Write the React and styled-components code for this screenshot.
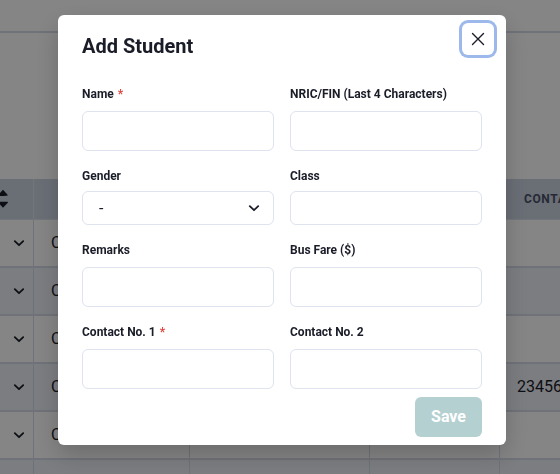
import React from "react";
import styled, { createGlobalStyle } from "styled-components";

const GlobalStyle = createGlobalStyle`
  *, *::before, *::after { box-sizing: border-box; }
  body {
    margin: 0;
    background: #ffffff;
    color: #1a1c28;
    font-family: Roboto, "Liberation Sans", sans-serif;
    font-size: 16px;
  }
  button, input, select { font: inherit; color: inherit; }
`;

const Page = styled.div`
  display: flex;
  flex-direction: column;
  height: 100vh;
  overflow: hidden;
`;

const TopBar = styled.header`
  flex: none;
  height: 33px;
  border-bottom: 2px solid #d5dbe6;
`;

const TableArea = styled.main`
  flex: 1;
  min-height: 0;
  padding-top: 146px;
  overflow: hidden;
`;

const Table = styled.table`
  width: 100%;
  min-width: 660px;
  table-layout: fixed;
  border-collapse: separate;
  border-spacing: 0;
`;

const Column = styled.col`
  width: ${({ $width }) => ($width ? `${$width}px` : "auto")};
`;

const HeadCell = styled.th`
  height: 41px;
  padding: 0 24px;
  background: #cbd3e1;
  border-right: 1px solid #dbe2ec;
  border-bottom: 1px solid #dbe2ec;
  color: #4a5068;
  font-size: 12px;
  font-weight: 700;
  letter-spacing: 0.05em;
  line-height: 16px;
  text-align: left;
  white-space: nowrap;
`;

const SortHeadCell = styled(HeadCell)`
  padding: 0;
`;

const Row = styled.tr`
  background: ${({ $striped }) => ($striped ? "#edf0f8" : "#ffffff")};
`;

const Cell = styled.td`
  height: 48px;
  padding: 0 17px;
  border-right: 1px solid #d5dbe6;
  border-bottom: 2px solid #d5dbe6;
  line-height: 24px;
  white-space: nowrap;
`;

const ToggleCell = styled(Cell)`
  padding: 0 6px 0 0;
`;

const PlainButton = styled.button`
  display: flex;
  align-items: center;
  padding: 0;
  border: 0;
  background: none;
  color: #1a1c28;
`;

const RowToggle = styled(PlainButton)`
  margin-left: auto;
`;

const Overlay = styled.div`
  position: fixed;
  inset: 0;
  display: flex;
  align-items: flex-start;
  justify-content: center;
  padding: 15px 0 0 4px;
  background: rgba(0, 0, 0, 0.48);
`;

const Dialog = styled.section`
  width: 100%;
  max-width: 448px;
  border-radius: 6px;
  background: #ffffff;
  box-shadow: 0 10px 24px rgba(0, 0, 0, 0.2);
`;

const DialogHeader = styled.header`
  display: flex;
  align-items: flex-start;
  justify-content: space-between;
  padding: 8px 12px 0 24px;
`;

const Title = styled.h2`
  margin: 8px 0 0;
  font-size: 20px;
  font-weight: 700;
  line-height: 30px;
`;

const CloseButton = styled(PlainButton)`
  justify-content: center;
  width: 32px;
  height: 32px;
  border-radius: 6px;
  box-shadow: 0 0 0 3px #9db9ec;
  outline: none;
`;

const Form = styled.form`
  display: flex;
  flex-direction: column;
  gap: 8px;
  padding: 24px 24px 8px;
`;

const Fields = styled.div`
  display: grid;
  grid-template-columns: 1fr 1fr;
  gap: 16px;
`;

const Field = styled.div`
  display: flex;
  flex-direction: column;
  gap: ${({ $compact }) => ($compact ? "6px" : "8px")};
`;

const Label = styled.label`
  font-size: 12px;
  font-weight: 700;
  line-height: 18px;
`;

const Required = styled.span`
  margin-left: 4px;
  color: #e0443e;
`;

const Input = styled.input`
  width: 100%;
  height: ${({ $compact }) => ($compact ? "34px" : "40px")};
  padding: 0 16px;
  border: 1px solid #dfe2ef;
  border-radius: 6px;
  background: #ffffff;
`;

const SelectBox = styled.div`
  display: grid;
  grid-template-columns: 1fr auto;
  align-items: center;
  height: 34px;
  padding-right: 11px;
  border: 1px solid #dfe2ef;
  border-radius: 6px;
`;

const Select = styled.select`
  grid-area: 1 / 1 / 2 / 3;
  height: 32px;
  padding: 0 32px 0 16px;
  border: 0;
  background: transparent;
  font-size: 16px;
  appearance: none;
`;

const SelectIcon = styled.span`
  display: flex;
  grid-area: 1 / 2;
  pointer-events: none;
`;

const SaveButton = styled.button`
  align-self: flex-end;
  height: 40px;
  padding: 0 16px;
  border: 0;
  border-radius: 6px;
  background: #b5d0d1;
  color: #ffffff;
  font-weight: 700;
  line-height: 20px;
`;

function Chevron() {
  return (
    <svg width="16" height="16" viewBox="0 0 16 16" fill="none" aria-hidden="true">
      <path d="M3.8 6.2 8 10.2l4.2-4" stroke="currentColor" strokeWidth="1.8" strokeLinecap="round" strokeLinejoin="round" />
    </svg>
  );
}

function SortIcon() {
  return (
    <svg width="9" height="20" viewBox="0 0 9 20" fill="currentColor" aria-hidden="true">
      <path d="M3 .8 8 6.2Q8.2 7-2 7-2.2 7-2 6.2ZM-2 12.7H7.4Q8.4 12.8 7.8 13.7L3 18.8-2 13.5Z" />
    </svg>
  );
}

function CloseIcon() {
  return (
    <svg width="14" height="14" viewBox="0 0 14 14" fill="none" aria-hidden="true">
      <path d="m1.5 1.5 11 11m0-11-11 11" stroke="currentColor" strokeWidth="1.4" strokeLinecap="round" />
    </svg>
  );
}

const rows = [
  { id: 1, name: "C", contact: "" },
  { id: 2, name: "C", contact: "" },
  { id: 3, name: "C", contact: "" },
  { id: 4, name: "C", contact: "23456" },
  { id: 5, name: "C", contact: "" },
  { id: 6, name: "", contact: "" },
];

function StudentTable() {
  return (
    <Table>
      <colgroup>
        <Column $width={34} />
        <Column $width={156} />
        <Column $width={180} />
        <Column $width={130} />
        <Column />
      </colgroup>
      <thead>
        <tr>
          <SortHeadCell>
            <PlainButton type="button" aria-label="Sort"><SortIcon /></PlainButton>
          </SortHeadCell>
          <HeadCell />
          <HeadCell />
          <HeadCell />
          <HeadCell>CONTACT</HeadCell>
        </tr>
      </thead>
      <tbody>
        {rows.map((row, index) => (
          <Row key={row.id} $striped={index % 2 === 1}>
            <ToggleCell>
              {row.name && (
                <RowToggle type="button" aria-label="Show options"><Chevron /></RowToggle>
              )}
            </ToggleCell>
            <Cell>{row.name}</Cell>
            <Cell />
            <Cell />
            <Cell>{row.contact}</Cell>
          </Row>
        ))}
      </tbody>
    </Table>
  );
}

function TextField({ id, label, required, compact }) {
  return (
    <Field $compact={compact}>
      <Label htmlFor={id}>
        {label}
        {required && <Required aria-hidden="true">*</Required>}
      </Label>
      <Input id={id} type="text" required={required} $compact={compact} />
    </Field>
  );
}

export default function App() {
  return (
    <>
      <GlobalStyle />
      <Page>
        <TopBar />
        <TableArea><StudentTable /></TableArea>
      </Page>
      <Overlay>
        <Dialog role="dialog" aria-modal="true" aria-labelledby="dialog-title">
          <DialogHeader>
            <Title id="dialog-title">Add Student</Title>
            <CloseButton type="button" aria-label="Close"><CloseIcon /></CloseButton>
          </DialogHeader>
          <Form>
            <Fields>
              <TextField id="name" label="Name" required />
              <TextField id="nric" label="NRIC/FIN (Last 4 Characters)" />
              <Field $compact>
                <Label htmlFor="gender">Gender</Label>
                <SelectBox>
                  <Select id="gender" defaultValue="">
                    <option value="">-</option>
                  </Select>
                  <SelectIcon><Chevron /></SelectIcon>
                </SelectBox>
              </Field>
              <TextField id="class" label="Class" compact />
              <TextField id="remarks" label="Remarks" />
              <TextField id="bus-fare" label="Bus Fare ($)" />
              <TextField id="contact-1" label="Contact No. 1" required />
              <TextField id="contact-2" label="Contact No. 2" />
            </Fields>
            <SaveButton type="submit" disabled>Save</SaveButton>
          </Form>
        </Dialog>
      </Overlay>
    </>
  );
}
